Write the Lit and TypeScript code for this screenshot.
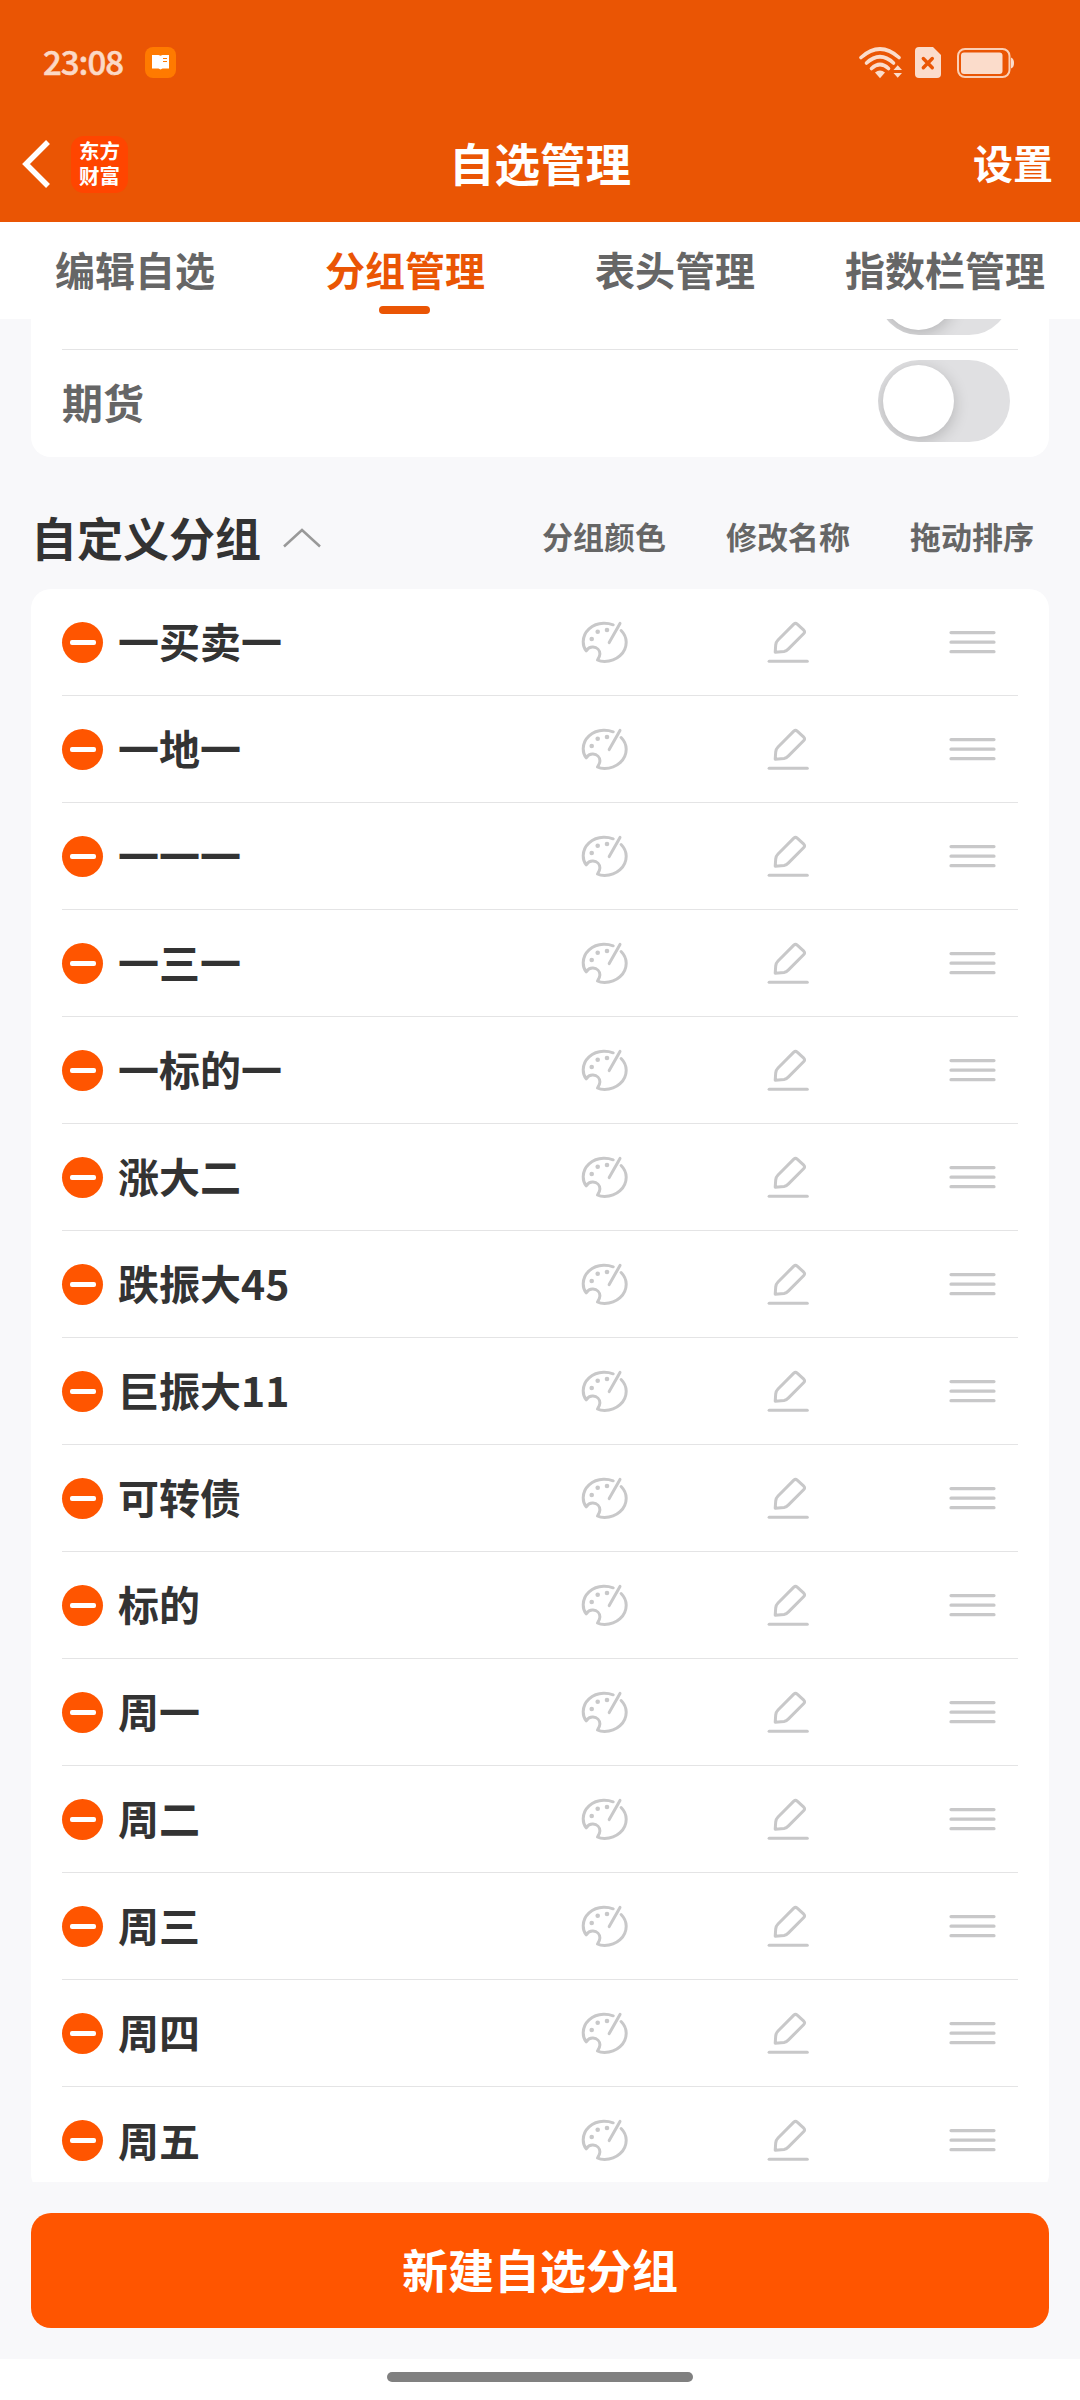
import { LitElement, html, css } from "lit";
import { customElement, property, state } from "lit/decorators.js";
import { classMap } from "lit/directives/class-map.js";

const paletteIcon = html`<svg width="48" height="45" viewBox="0 0 48 45" fill="none" stroke="#c8c8c9" stroke-width="3" stroke-linecap="round" stroke-linejoin="round">
  <path d="M33.2 4.8C30 3.7 26.8 3.2 23.5 3.3C12 3.6 3.3 11.6 3.2 21.8C3.2 25.2 4 28.3 6.2 30.8C8 28.2 10.2 26.9 13 27.1C17 27.4 20 30.2 19.9 34C19.8 36.5 18.6 38.2 17.5 40C19.5 41.1 22 41.5 24.6 41.5C37 41.4 46.2 32.6 46.2 22.3C46.2 17.8 44.4 13.8 41.1 10.5"/>
  <path d="M40 3.4L29.2 22.6"/>
  <g fill="#c8c8c9" stroke="none"><circle cx="11.7" cy="19" r="2.3"/><circle cx="17.7" cy="11.7" r="2.3"/><circle cx="27" cy="10" r="2.3"/></g>
</svg>`;

const penIcon = html`<svg width="42" height="45" viewBox="0 0 42 45" fill="none" stroke="#c8c8c9" stroke-width="3" stroke-linecap="round" stroke-linejoin="round">
  <path d="M8.2 32.2L8.7 25Q9 22 11 20L26.8 4.1Q28.500 2.6 30.200 4.1L36.8 10.2Q38.300 11.800 36.8 13.5L21.5 28.9Q19.500 31 17 31.500Z"/>
  <path d="M2.100 41.300H40.300"/>
</svg>`;

const dragIcon = html`<svg width="48" height="45" viewBox="0 0 48 45" stroke="#c8c8c9" stroke-width="3.2" stroke-linecap="round">
  <path d="M3 12.6H46M3 22.2H46M3 31.7H46"/>
</svg>`;

@customElement("status-bar")
class StatusBar extends LitElement {
  static styles = css`
    :host { display: flex; align-items: center; height: 81px; padding: 22px 66px 22px 43px; }
    .time { width: 82px; padding-bottom: 4px; font-size: 33px; line-height: 40px; font-weight: 500; letter-spacing: -1px; color: #fbd9c6; -webkit-text-stroke: 0.5px #fbd9c6; }
    .app { margin-left: 20px; }
    .icons { margin-left: auto; display: flex; align-items: center; }
    svg { display: block; }
    .sim { margin-left: 13px; }
    .battery { margin-left: 16px; }
  `;
  render() {
    return html`
      <span class="time">23:08</span>
      <svg class="app" width="31" height="31" viewBox="0 0 31 31">
        <rect width="31" height="31" rx="8" fill="#ff7a00"/>
        <path d="M7 8h6.500l2 .7 2-.7H24v13.600h-6.500l-2 1-2-1H7z" fill="#fff"/>
        <path d="M18 11.500h4M18 14.500h4" stroke="#ff7a00" stroke-width="1"/>
      </svg>
      <div class="icons">
        <svg width="43" height="32" viewBox="0 0 43 32" fill="none" stroke="#fbdccb" stroke-width="3.6" stroke-linecap="round">
          <path d="M2 10.5Q21 -6.5 40 10.5"/>
          <path d="M7.5 16Q21 3.5 34.5 16"/>
          <path d="M12.5 21.500Q21 13.500 29.500 21.500"/>
          <g fill="#fbdccb" stroke="none">
            <path d="M16 25.500Q21 21.500 26 25.500L21 31.200z"/>
            <path d="M34.500 23L38.700 18.200L43 23zM34.500 26H43L38.700 30.800z"/>
          </g>
        </svg>
        <svg class="sim" width="26" height="31" viewBox="0 0 26 31">
          <path d="M4 0H18L26 8V27Q26 31 22 31H4Q0 31 0 27V4Q0 0 4 0z" fill="#fbdccb"/>
          <path d="M8.300 11.500L17.300 20.700M17.300 11.500L8.300 20.700" stroke="#ea5504" stroke-width="3.400" stroke-linecap="round"/>
        </svg>
        <svg class="battery" width="57" height="30" viewBox="0 0 57 30">
          <rect x="1" y="1" width="51.500" height="28" rx="7" fill="none" stroke="#fbcfb5" stroke-width="2"/>
          <rect x="4" y="4.500" width="41.500" height="21.500" rx="3" fill="#fbdccb"/>
          <path d="M54 9.500Q57 10.500 57 15T54 20.500z" fill="#fbdccb"/>
        </svg>
      </div>
    `;
  }
}

@customElement("toggle-switch")
class ToggleSwitch extends LitElement {
  @property({ type: Boolean }) on = false;
  static styles = css`
    :host { display: block; }
    .track { display: flex; align-items: center; width: 132px; height: 82px; padding: 5px; box-sizing: border-box; border-radius: 41px; background: #e0e0e2; overflow: hidden; }
    .track.on { justify-content: flex-end; background: #ff5500; }
    .knob { width: 71px; height: 72px; border-radius: 50%; background: #fff; box-shadow: 0 4px 16px rgba(0, 0, 0, 0.2); }
  `;
  render() {
    return html`<div class=${classMap({ track: true, on: this.on })}><div class="knob"></div></div>`;
  }
}

@customElement("group-row")
class GroupRow extends LitElement {
  @property() name = "";
  static styles = css`
    :host { display: grid; grid-template-columns: 1fr 92px 92px 92px; column-gap: 92px; align-items: center; height: 107px; }
    .label { display: flex; align-items: center; gap: 15px; margin-right: -92px; white-space: nowrap; }
    .remove { display: flex; align-items: center; justify-content: center; width: 41px; height: 41px; border-radius: 50%; background: #ff5500; }
    .bar { width: 26px; height: 5px; border-radius: 2px; background: #fff; }
    .name { padding-bottom: 4px; font-size: 41px; line-height: 60px; font-weight: 700; color: #333; }
    .action { display: flex; justify-content: center; }
    svg { display: block; }
  `;
  render() {
    return html`
      <div class="label"><span class="remove"><span class="bar"></span></span><span class="name">${this.name}</span></div>
      <div class="action">${paletteIcon}</div>
      <div class="action">${penIcon}</div>
      <div class="action">${dragIcon}</div>
    `;
  }
}

@customElement("app-root")
class AppRoot extends LitElement {
  @state() private active = 1;
  private tabs = ["编辑自选", "分组管理", "表头管理", "指数栏管理"];
  private groups = ["一买卖一", "一地一", "一一一", "一三一", "一标的一", "涨大二", "跌振大45", "巨振大11", "可转债", "标的", "周一", "周二", "周三", "周四", "周五"];

  static styles = css`
    :host { display: flex; flex-direction: column; width: 1080px; height: 2400px; overflow: hidden; background: #f8f8fa; font-family: "Noto Sans CJK SC", sans-serif; font-weight: 700; }
    .header { display: flex; flex-direction: column; height: 222px; background: #ea5504; flex: none; }
    .nav { display: grid; grid-template-columns: 1fr auto 1fr; align-items: center; height: 78px; padding: 0 27px 0 27px; color: #fff; }
    .left { display: flex; align-items: center; gap: 20px; margin-left: -5px; }
    .left svg { display: block; }
    .logo { display: flex; flex-direction: column; justify-content: center; width: 57px; height: 57px; border-radius: 13px; background: #ff4500; font-family: "Liberation Sans", "Noto Sans CJK SC", sans-serif; font-size: 20.5px; line-height: 25px; text-align: center; }
    .title { padding-bottom: 5px; font-size: 45.5px; line-height: 66px; }
    .settings { justify-self: end; padding-bottom: 4px; font-size: 40px; line-height: 60px; }
    status-bar { flex: none; }
    .tabs { display: grid; grid-template-columns: repeat(4, 1fr); height: 97px; background: #fff; flex: none; }
    .tab { display: flex; flex-direction: column; align-items: center; padding-top: 17px; font-size: 40px; line-height: 60px; color: #666; white-space: nowrap; }
    .tab.active { color: #ea5504; }
    .tab.active::after { content: ""; width: 51px; height: 8px; margin-top: 7px; margin-right: 1px; border-radius: 4px; background: #ea5504; }
    .viewport { height: 1863px; overflow: hidden; flex: none; }
    .content { margin-top: -76px; padding: 0 31px; }
    .card { padding: 0 31px; background: #fff; border-radius: 20px; }
    .card > * { box-sizing: border-box; }
    .card > :not(:last-child) { border-bottom: 1px solid #e4e4e5; }
    .setting { display: flex; align-items: center; justify-content: space-between; height: 107px; padding-right: 8px; font-size: 41px; line-height: 60px; color: #666; }
    .setting span { padding-bottom: 5px; }
    .setting toggle-switch { margin-bottom: 5px; }
    .section { display: grid; grid-template-columns: 1fr 124px 124px 124px; column-gap: 60px; align-items: center; height: 132px; padding: 29px 15px 0 0; box-sizing: border-box; }
    .heading { display: flex; align-items: center; gap: 21px; font-size: 46px; line-height: 66px; color: #333; }
    .heading span { padding-bottom: 4px; }
    .column { padding-bottom: 3px; font-size: 31px; line-height: 44px; color: #666; text-align: center; }
    .footer { display: flex; padding: 31px; flex: none; }
    .create { flex: 1; height: 115px; border: 0; padding: 0 0 5px; border-radius: 20px; background: #ff5500; color: #fff; font: 700 46px/66px "Noto Sans CJK SC", sans-serif; }
    .gesture { display: flex; justify-content: center; flex: 1; padding-top: 13px; background: #fff; }
    .pill { width: 306px; height: 10px; border-radius: 5px; background: #808080; }
  `;

  render() {
    return html`
      <header class="header">
        <status-bar></status-bar>
        <div class="nav">
          <div class="left">
            <svg width="29" height="48" viewBox="0 0 29 48" fill="none" stroke="#fff" stroke-width="5.500"><path d="M26 2L4 24L26 46"/></svg>
            <div class="logo"><span>东方</span><span>财富</span></div>
          </div>
          <div class="title">自选管理</div>
          <div class="settings">设置</div>
        </div>
      </header>
      <nav class="tabs">
        ${this.tabs.map((t, i) => html`<div class=${classMap({ tab: true, active: i === this.active })} @click=${() => (this.active = i)}>${t}</div>`)}
      </nav>
      <main class="viewport">
        <div class="content">
          <div class="card">
            <div class="setting"><span></span><toggle-switch></toggle-switch></div>
            <div class="setting"><span>期货</span><toggle-switch></toggle-switch></div>
          </div>
          <div class="section">
            <div class="heading"><span>自定义分组</span>
              <svg width="40" height="22" viewBox="0 0 40 22" fill="none" stroke="#999" stroke-width="2.500"><path d="M2 19.500L20 3L38 19.500"/></svg>
            </div>
            <div class="column">分组颜色</div>
            <div class="column">修改名称</div>
            <div class="column">拖动排序</div>
          </div>
          <div class="card">${this.groups.map((g) => html`<group-row .name=${g}></group-row>`)}</div>
        </div>
      </main>
      <footer class="footer"><button class="create">新建自选分组</button></footer>
      <div class="gesture"><div class="pill"></div></div>
    `;
  }
}
